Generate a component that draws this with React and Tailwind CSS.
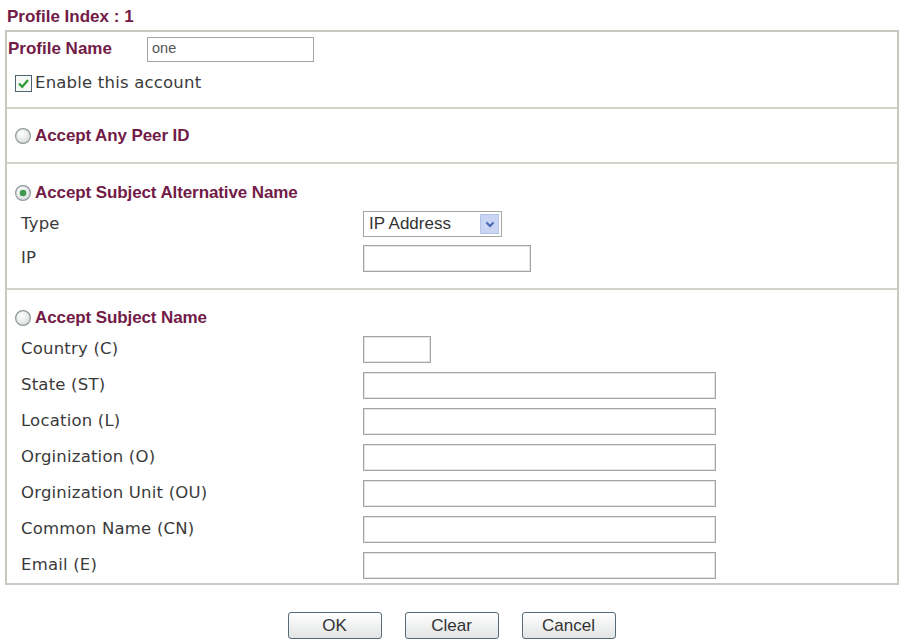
import React from 'react';

const sans = { fontFamily: '"Liberation Sans", Arial, sans-serif' };
const verdana = { fontFamily: '"DejaVu Sans", Verdana, sans-serif' };

const Field = ({ w = 'w-[353px]' }) => (
  <div className={`${w} h-[27px] border border-[#a4a4a4] bg-white shadow-[inset_0_0_0_1px_#e4e4e4]`} />
);

const Radio = ({ checked }) => (
  <svg width="18" height="18" viewBox="0 0 18 18" className="shrink-0">
    <defs>
      <radialGradient id={checked ? 'rg-on' : 'rg-off'} cx="0.4" cy="0.35" r="0.7">
        <stop offset="0" stopColor="#ffffff" />
        <stop offset="1" stopColor="#d8dcdc" />
      </radialGradient>
    </defs>
    <circle cx="9" cy="9" r="7.4" fill={`url(#${checked ? 'rg-on' : 'rg-off'})`} stroke="#8d9a9a" strokeWidth="1.2" />
    {checked && <circle cx="9" cy="9" r="3.3" fill="#3e9a4a" />}
  </svg>
);

const Check = () => (
  <svg width="17" height="17" viewBox="0 0 17 17" className="shrink-0">
    <rect x="0.5" y="0.5" width="16" height="16" fill="#f6f8f6" stroke="#4f6470" />
    <path d="M4 8.5 L7.2 11.8 L13 5" fill="none" stroke="#2f9a34" strokeWidth="2.2" />
  </svg>
);

const Heading = ({ checked, children }) => (
  <div className="flex items-center h-[26px] pl-[7px] gap-[3px]">
    <Radio checked={checked} />
    <span className="text-[17px] font-bold text-[#721b47] tracking-[-0.1px]" style={sans}>
      {children}
    </span>
  </div>
);

const Row = ({ label, h = 'h-[36px]', children }) => (
  <div className={`flex items-center ${h}`}>
    <div className="w-[356px] pl-[14px] text-[16.5px] text-[#3a3a3a] tracking-[0.2px]" style={verdana}>
      {label}
    </div>
    {children}
  </div>
);

const Button = ({ children }) => (
  <button
    className="w-[94px] h-[27px] rounded-[3px] border border-[#566a78] bg-gradient-to-b from-white to-[#e2e4e4] text-[17px] text-[#333] leading-none"
    style={sans}
  >
    {children}
  </button>
);

const subjectFields = [
  'State (ST)',
  'Location (L)',
  'Orginization (O)',
  'Orginization Unit (OU)',
  'Common Name (CN)',
  'Email (E)',
];

export default function App() {
  return (
    <div className="w-[901px] h-[643px] bg-white pt-[4px] pl-[5px]">
      <div className="h-[26px] pl-[2px] text-[17px] font-bold text-[#721b47]" style={sans}>
        Profile Index : 1
      </div>

      <div className="w-[894px] border-2 border-[#c9c9c1]">
        {/* account */}
        <div className="pt-[2px] pb-[5px] border-b-2 border-[#d3d3cb]">
          <div className="flex items-center h-[30px]">
            <div className="w-[140px] pl-[1px] text-[17px] font-bold text-[#721b47]" style={sans}>
              Profile Name
            </div>
            <div className="w-[167px] h-[25px] border border-[#a4a4a4] flex items-center pl-[4px]">
              <span className="text-[14.5px] text-[#555]" style={sans}>one</span>
            </div>
          </div>
          <div className="flex items-center h-[38px] pl-[8px] gap-[3px]">
            <Check />
            <span className="text-[16.5px] text-[#3a3a3a] tracking-[0.2px]" style={verdana}>Enable this account</span>
          </div>
        </div>

        {/* any peer */}
        <div className="h-[55px] flex items-center border-b-2 border-[#d3d3cb]">
          <Heading>Accept Any Peer ID</Heading>
        </div>

        {/* alternative name */}
        <div className="pt-[16px] pb-[14px] border-b-2 border-[#d3d3cb]">
          <Heading checked>Accept Subject Alternative Name</Heading>
          <Row label="Type">
            <div className="w-[139px] h-[26px] border border-[#a4a4a4] flex items-center justify-between pl-[5px] pr-[2px]">
              <span className="text-[17px] text-[#333]" style={sans}>IP Address</span>
              <div className="w-[19px] h-[20px] bg-[#c9d5f2] border border-[#b5c3e6] flex items-center justify-center">
                <svg width="10" height="7" viewBox="0 0 10 7">
                  <path d="M1.5 1.5 L5 5 L8.5 1.5" fill="none" stroke="#4766b8" strokeWidth="2" />
                </svg>
              </div>
            </div>
          </Row>
          <Row label="IP" h="h-[32px]">
            <Field w="w-[168px]" />
          </Row>
        </div>

        {/* subject name */}
        <div className="pt-[15px]">
          <Heading>Accept Subject Name</Heading>
          <Row label="Country (C)">
            <Field w="w-[68px]" />
          </Row>
          {subjectFields.map((f) => (
            <Row key={f} label={f}>
              <Field />
            </Row>
          ))}
        </div>
      </div>

      <div className="flex justify-center gap-[23px] mt-[27px] pr-[3px]">
        <Button>OK</Button>
        <Button>Clear</Button>
        <Button>Cancel</Button>
      </div>
    </div>
  );
}
